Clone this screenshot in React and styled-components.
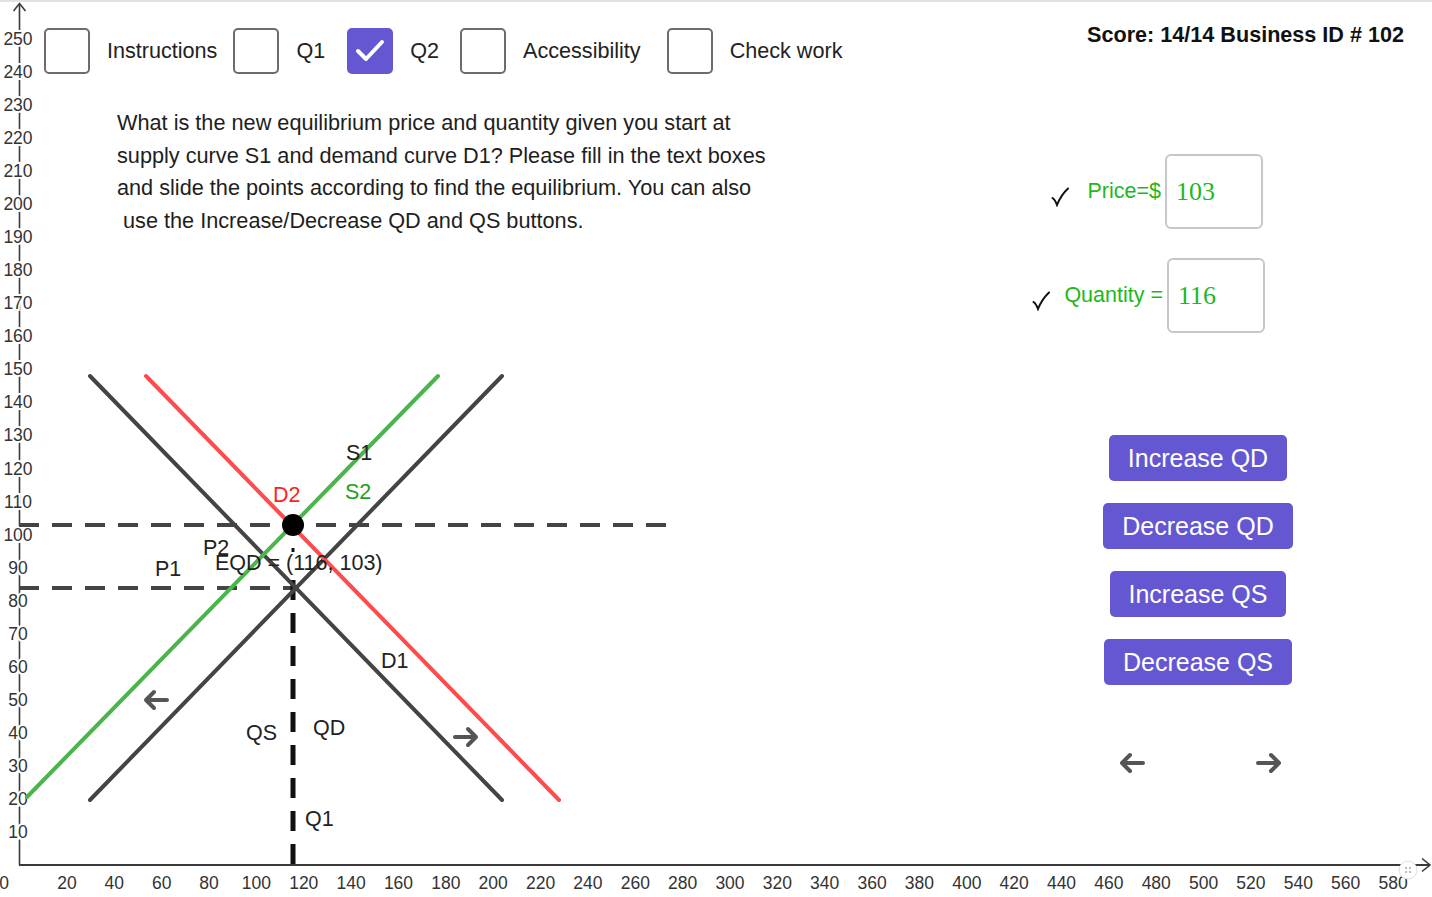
import React from "react";
import styled, { createGlobalStyle } from "styled-components";

const X = (v) => 19.6 + v * 2.368;
const Y = (v) => 865 - v * 3.304;

const yTicks = Array.from({ length: 25 }, (_, i) => (i + 1) * 10);
const xTicks = Array.from({ length: 29 }, (_, i) => (i + 1) * 20);

const toggles = [
  { label: "Instructions", after: 16 },
  { label: "Q1", after: 22 },
  { label: "Q2", after: 21, checked: true },
  { label: "Accessibility", after: 26 },
  { label: "Check work", after: 0 },
];

const answers = [
  { label: "Price=$", value: "103", tickGap: 19, shift: 2 },
  { label: "Quantity =", value: "116", tickGap: 14, shift: 0 },
];

const actions = ["Increase QD", "Decrease QD", "Increase QS", "Decrease QS"];

const graphLabels = [
  { text: "S1", x: 346, y: 460, color: "#222" },
  { text: "S2", x: 345, y: 499, color: "#1f9e1f" },
  { text: "D2", x: 273, y: 502, color: "#ff1f1f" },
  { text: "P2", x: 203, y: 555, color: "#222" },
  { text: "P1", x: 155, y: 576, color: "#222" },
  { text: "EQD = (116, 103)", x: 215, y: 570, color: "#222" },
  { text: "D1", x: 381, y: 668, color: "#222" },
  { text: "QS", x: 246, y: 740, color: "#222" },
  { text: "QD", x: 313, y: 735, color: "#222" },
  { text: "Q1", x: 305, y: 826, color: "#222" },
];

const GlobalStyle = createGlobalStyle`
  body {
    margin: 0;
    background: #fff;
    font-family: "Liberation Sans", Arial, sans-serif;
  }
`;

const Stage = styled.div`
  position: relative;
  width: 1432px;
  height: 897px;
  overflow: hidden;
  background: #fff;
  box-shadow: inset 0 2px 0 #e2e2e2;
`;

const Chart = styled.svg`
  position: absolute;
  top: 0;
  left: 0;
  width: 1432px;
  height: 897px;
  font-family: "Liberation Sans", Arial, sans-serif;
`;

const Overlay = styled.div`
  position: relative;
  z-index: 1;
  height: 100%;
  display: grid;
  grid-template-columns: 1fr 432px;
`;

const LeftPane = styled.div`
  padding: 28px 0 0 44px;
`;

const Toolbar = styled.div`
  display: flex;
  align-items: center;
`;

const Toggle = styled.label`
  display: flex;
  align-items: center;
  gap: 17px;
  margin-right: ${(p) => p.$after}px;
  font-size: 21.6px;
  color: #222;
`;

const Box = styled.span`
  box-sizing: border-box;
  width: 46px;
  height: 46px;
  border-radius: 5px;
  border: 2.5px solid ${(p) => (p.$checked ? "#6557d2" : "#6c6c6c")};
  background: ${(p) => (p.$checked ? "#6557d2" : "#fff")};
  display: flex;
  align-items: center;
  justify-content: center;
`;

const Question = styled.p`
  margin: 33px 0 0 73px;
  font-size: 21.7px;
  line-height: 32.5px;
  color: #1e1e1e;
  white-space: pre;
`;

const RightPane = styled.div`
  display: flex;
  flex-direction: column;
`;

const Score = styled.div`
  padding: 22px 28px 0 0;
  text-align: right;
  font-size: 21.6px;
  font-weight: 700;
  line-height: 26px;
  color: #111;
`;

const Answers = styled.div`
  margin-top: 106px;
  padding-right: 167px;
  display: flex;
  flex-direction: column;
  align-items: flex-end;
  gap: 29px;
`;

const AnswerRow = styled.div`
  display: flex;
  align-items: center;
  margin-right: ${(p) => p.$shift}px;
`;

const Tick = styled.svg`
  width: 18px;
  height: 20px;
  margin-top: 10px;
  margin-right: ${(p) => p.$gap}px;
`;

const AnswerLabel = styled.span`
  font-size: 21.5px;
  color: #1db81d;
  margin-right: 4px;
`;

const AnswerBox = styled.div`
  box-sizing: border-box;
  width: 98px;
  height: 75px;
  border: 2px solid #c6c6cc;
  border-radius: 6px;
  padding-left: 9px;
  display: flex;
  align-items: center;
  font-family: "Liberation Serif", "Times New Roman", serif;
  font-size: 26px;
  color: #1db81d;
`;

const Actions = styled.div`
  margin-top: 102px;
  padding-right: 36px;
  display: flex;
  flex-direction: column;
  align-items: center;
  gap: 22px;
`;

const ActionButton = styled.button`
  height: 46px;
  padding: 0 19px;
  border: none;
  border-radius: 5px;
  background: #6557d2;
  color: #fff;
  font-family: "Liberation Sans", Arial, sans-serif;
  font-size: 25px;
`;

const Nav = styled.div`
  align-self: flex-start;
  margin: 67px 0 0 118px;
  width: 165px;
  display: flex;
  justify-content: space-between;
`;

const ArrowIcon = styled.svg`
  width: 28px;
  height: 22px;
`;

function ArrowPath({ dir }) {
  const d =
    dir === "left"
      ? "M25 11 H4 M12 3 L4 11 L12 19"
      : "M3 11 H24 M16 3 L24 11 L16 19";
  return (
    <path
      d={d}
      fill="none"
      stroke="#555"
      strokeWidth="4"
      strokeLinecap="round"
      strokeLinejoin="round"
    />
  );
}

function Graph() {
  return (
    <Chart viewBox="0 0 1432 897">
      {/* axes */}
      <line x1="19.5" y1="4" x2="19.5" y2="865" stroke="#3a3a3a" strokeWidth="1.6" />
      <path d="M13.5 11 L19.5 3.5 L25.5 11" fill="none" stroke="#3a3a3a" strokeWidth="1.6" />
      <line x1="19" y1="865" x2="1430" y2="865" stroke="#3a3a3a" strokeWidth="2" />
      <path d="M1422 858.5 L1430 865 L1422 871.5" fill="none" stroke="#3a3a3a" strokeWidth="1.6" />

      <g fontSize="17.5" fill="#333" textAnchor="middle">
        {yTicks.map((v) => (
          <text
            key={v}
            x="18"
            y={Y(v) + 6}
            stroke="#fff"
            strokeWidth="4"
            paintOrder="stroke"
          >
            {v}
          </text>
        ))}
        <text x="4" y="889">0</text>
        {xTicks.map((v) => (
          <text key={v} x={X(v)} y="889">
            {v}
          </text>
        ))}
      </g>

      {/* graphics view home button */}
      <circle cx="1408" cy="870" r="9" fill="#fff" stroke="#e0e0e0" strokeWidth="1" />
      <g fill="#bbb">
        <rect x="1405" y="867" width="2" height="2" />
        <rect x="1409" y="867" width="2" height="2" />
        <rect x="1405" y="871" width="2" height="2" />
        <rect x="1409" y="871" width="2" height="2" />
      </g>

      {/* price / quantity guides */}
      <line x1="19" y1="525" x2="673" y2="525" stroke="#444" strokeWidth="4" strokeDasharray="20 13" />
      <line x1="19" y1="588" x2="293" y2="588" stroke="#444" strokeWidth="4" strokeDasharray="20 13" />
      <line x1="293" y1="548" x2="293" y2="552" stroke="#111" strokeWidth="3" />
      <line x1="293" y1="580" x2="293" y2="865" stroke="#111" strokeWidth="5" strokeDasharray="20 13" />

      {/* curves */}
      <g strokeWidth="4" strokeLinecap="round">
        <line x1="90" y1="376" x2="502" y2="800" stroke="#444" />
        <line x1="90" y1="800" x2="502" y2="376" stroke="#444" />
        <line x1="146" y1="376" x2="559" y2="800" stroke="#ff4b4b" />
        <line x1="27" y1="797" x2="438" y2="376" stroke="#4cb44c" />
      </g>

      <circle cx="293" cy="525" r="11" fill="#000" />

      <g fontSize="21.5">
        {graphLabels.map((l) => (
          <text key={l.text} x={l.x} y={l.y} fill={l.color}>
            {l.text}
          </text>
        ))}
      </g>

      <g transform="translate(142 689)">
        <ArrowPath dir="left" />
      </g>
      <g transform="translate(452 726)">
        <ArrowPath dir="right" />
      </g>
    </Chart>
  );
}

export default function App() {
  return (
    <>
      <GlobalStyle />
      <Stage>
        <Graph />
        <Overlay>
          <LeftPane>
            <Toolbar>
              {toggles.map((t) => (
                <Toggle key={t.label} $after={t.after}>
                  <Box $checked={t.checked}>
                    {t.checked && (
                      <svg width="34" height="30" viewBox="0 0 34 30">
                        <path
                          d="M5 15 L13 23 L29 6"
                          fill="none"
                          stroke="#fff"
                          strokeWidth="4"
                          strokeLinecap="round"
                          strokeLinejoin="round"
                        />
                      </svg>
                    )}
                  </Box>
                  {t.label}
                </Toggle>
              ))}
            </Toolbar>
            <Question>
              {"What is the new equilibrium price and quantity given you start at\n" +
                "supply curve S1 and demand curve D1? Please fill in the text boxes\n" +
                "and slide the points according to find the equilibrium. You can also\n" +
                " use the Increase/Decrease QD and QS buttons."}
            </Question>
          </LeftPane>

          <RightPane>
            <Score>Score: 14/14 Business ID # 102</Score>

            <Answers>
              {answers.map((a) => (
                <AnswerRow key={a.label} $shift={a.shift}>
                  <Tick viewBox="0 0 18 20" $gap={a.tickGap}>
                    <path
                      d="M1.5 11 Q4 12.5 6 18 Q10 8 17 1.5"
                      fill="none"
                      stroke="#111"
                      strokeWidth="2"
                      strokeLinecap="round"
                    />
                  </Tick>
                  <AnswerLabel>{a.label}</AnswerLabel>
                  <AnswerBox>{a.value}</AnswerBox>
                </AnswerRow>
              ))}
            </Answers>

            <Actions>
              {actions.map((a) => (
                <ActionButton key={a}>{a}</ActionButton>
              ))}
            </Actions>

            <Nav>
              <ArrowIcon viewBox="0 0 28 22">
                <ArrowPath dir="left" />
              </ArrowIcon>
              <ArrowIcon viewBox="0 0 28 22">
                <ArrowPath dir="right" />
              </ArrowIcon>
            </Nav>
          </RightPane>
        </Overlay>
      </Stage>
    </>
  );
}
